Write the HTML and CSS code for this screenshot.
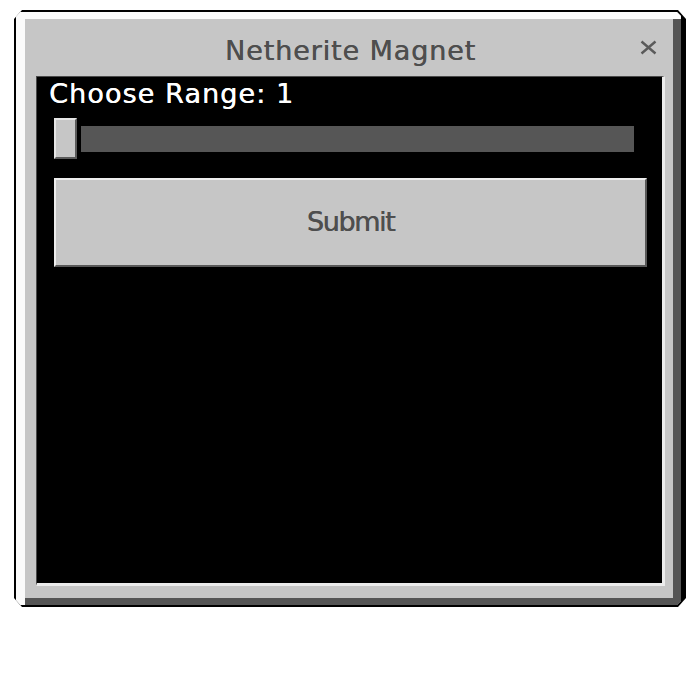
FILE: index.html
```html
<!DOCTYPE html>
<html lang="en">
<head>
<meta charset="utf-8">
<title>Netherite Magnet</title>
<link rel="stylesheet" href="styles.css">
</head>
<body>
<div class="window">
  <div class="frame">
    <div class="header">
      <div class="title">Netherite Magnet</div>
      <button class="close" aria-label="Close">
        <svg width="17" height="15" viewBox="0 0 17 15"><path d="M1.5 1.5 L15.5 13.5 M15.5 1.5 L1.5 13.5" stroke="#5a5a5a" stroke-width="2.4" fill="none"/></svg>
      </button>
    </div>
    <div class="panel">
      <div class="label">Choose Range: 1</div>
      <div class="slider">
        <div class="thumb"></div>
        <div class="track"></div>
      </div>
      <button class="submit">Submit</button>
    </div>
  </div>
</div>
</body>
</html>
```
FILE: styles.css
```css
html, body {
  margin: 0;
  padding: 0;
  background: #ffffff;
}
body {
  font-family: "DejaVu Sans", "Noto Sans", sans-serif;
}
.window {
  margin: 10px 0 0 14px;
  width: 672px;
  height: 597px;
  box-sizing: border-box;
  padding: 2px 5px 2px 2px;
  background: #000;
  clip-path: polygon(8px 0, calc(100% - 8px) 0, 100% 9px, 100% calc(100% - 9px), calc(100% - 8px) 100%, 8px 100%, 0 calc(100% - 9px), 0 9px);
}
.frame {
  height: 593px;
  box-sizing: border-box;
  background: #c6c6c6;
  box-shadow: inset 9px 7px 0 #fbfbfb, inset -8px -7px 0 #555555;
  padding: 0 16px 19px 20px;
  display: flex;
  flex-direction: column;
  clip-path: polygon(4px 0, calc(100% - 4px) 0, 100% 4px, 100% calc(100% - 4px), calc(100% - 4px) 100%, 4px 100%, 0 calc(100% - 4px), 0 4px);
}
.header {
  position: relative;
  height: 64px;
  box-sizing: border-box;
  padding-top: 25px;
  flex: none;
}
.title {
  text-align: center;
  font-size: 27px;
  line-height: 27px;
  letter-spacing: 0.9px;
  color: #4e4e4e;
  text-shadow: 0.4px 0 0 #4e4e4e;
}
.close {
  position: absolute;
  top: 28px;
  right: 8px;
  width: 17px;
  height: 15px;
  padding: 0;
  border: 0;
  background: none;
  display: block;
}
.close svg {
  display: block;
}
.panel {
  flex: 1;
  background: #000;
  border-top: 1px solid #4a4a4a;
  border-left: 1px solid #4a4a4a;
  border-right: 3px solid #ececec;
  border-bottom: 3px solid #ececec;
  padding: 0 15px 0 17px;
  display: flex;
  flex-direction: column;
}
.label {
  margin: 3px 0 0 -5px;
  font-size: 27px;
  line-height: 27px;
  letter-spacing: 1.1px;
  color: #ffffff;
  text-shadow: 0.4px 0 0 #ffffff;
}
.slider {
  margin: 11px 13px 0 0;
  height: 41px;
  display: flex;
  align-items: center;
  gap: 4px;
}
.thumb {
  width: 23px;
  height: 41px;
  box-sizing: border-box;
  background: #c6c6c6;
  border-top: 2px solid #e6e6e6;
  border-left: 2px solid #e6e6e6;
  border-right: 2px solid #5a5a5a;
  border-bottom: 2px solid #5a5a5a;
}
.track {
  flex: 1;
  height: 26px;
  background: #565656;
}
.submit {
  margin-top: 19px;
  height: 89px;
  width: 100%;
  box-sizing: border-box;
  background: #c6c6c6;
  border-top: 2px solid #eeeeee;
  border-left: 2px solid #eeeeee;
  border-right: 2px solid #585858;
  border-bottom: 2px solid #585858;
  font-family: "DejaVu Sans", "Noto Sans", sans-serif;
  font-size: 27px;
  line-height: 27px;
  letter-spacing: -1.4px;
  color: #4e4e4e;
  text-shadow: 0.4px 0 0 #4e4e4e;
  padding: 0 0 2px 0;
}
```
